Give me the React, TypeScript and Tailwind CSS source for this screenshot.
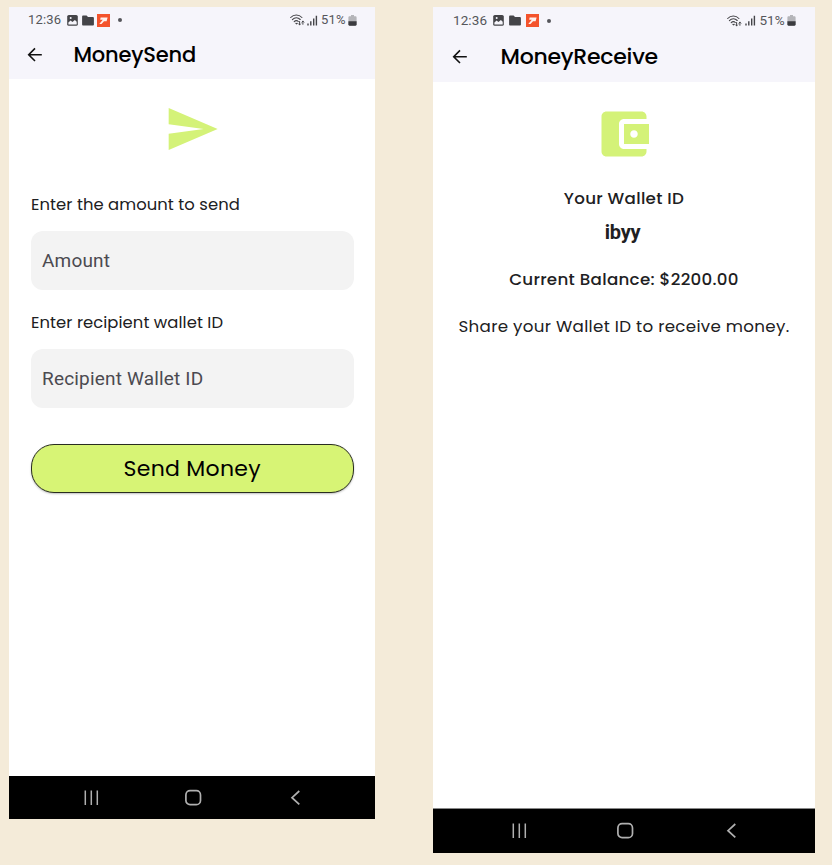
import React from "react";

const poppins = "font-['Poppins','Inter',sans-serif] whitespace-nowrap";
const roboto = "font-['Roboto',sans-serif] whitespace-nowrap";

function PictureIcon() {
  return (
    <svg className="h-[11px] w-[11px] shrink-0" viewBox="0 0 11 11">
      <rect x="0.200" width="10.600" height="10.800" rx="1.600" fill="#444448" />
      <path d="M1.400 9.500V7.400L3.600 5.400 5.400 7 7.900 5 9.700 6.700V9.500z" fill="#f6f5fb" />
      <circle cx="3.700" cy="3" r="1" fill="#f6f5fb" />
    </svg>
  );
}

function FolderIcon() {
  return (
    <svg className="h-[11px] w-3 shrink-0" viewBox="0 0 12 11">
      <path d="M1.2.6h3.4L6 2h4.8c.6 0 1.1.5 1.1 1.100v6.300c0 .6-.5 1.100-1.100 1.100H1.200C.6 10.500.1 10 .1 9.400V1.700C.1 1.100.6.6 1.200.6z" fill="#444448" />
    </svg>
  );
}

function OrangeIcon() {
  return (
    <svg className="h-[13px] w-[13px] shrink-0" viewBox="0 0 13 13">
      <rect width="13" height="13" fill="#f4532c" />
      <path d="M3.600 3.400h7L9.600 7.300H7L4.500 9.900H2.300L5.800 5.800H3.200z" fill="#fff" fillOpacity="0.920" />
    </svg>
  );
}

function WifiIcon() {
  return (
    <svg className="h-3 w-[15px] shrink-0" viewBox="0 0 15 12" fill="none" stroke="#444448" strokeWidth="1.100" strokeLinecap="round">
      <path d="M.7 3.500C3.700.2 8.900.2 11.900 3.500M2.400 5.600C4.700 3.200 8 3.200 10.200 5.500M4.200 7.600c1.300-1.300 3-1.300 4.100-.1M5.900 9.300l.6.500.7-.5" />
      <path d="M9.600 7.500v3.300M8.600 9.900l1 1 1-1M12.900 10.300V7.200M11.900 8.100l1-1 1 1" strokeWidth="1" />
    </svg>
  );
}

function SignalIcon() {
  return (
    <svg className="h-[11px] w-[11px] shrink-0" viewBox="0 0 11 11" stroke="#444448" strokeWidth="1.400">
      <path d="M1 8.500v2M3.800 6.200v4.300M6.700 3.500v7M9.400.7v9.800" />
    </svg>
  );
}

function BatteryIcon() {
  return (
    <svg className="h-[11px] w-[9px] shrink-0" viewBox="0 0 9 11">
      <path d="M3 0h3v1.300h1.400c.7 0 1.200.5 1.200 1.200v7.100c0 .7-.5 1.200-1.200 1.200H1.600C.9 10.800.4 10.300.4 9.600V2.500c0-.7.5-1.200 1.200-1.200H3z" fill="#b5b5b9" />
      <path d="M.4 6.200h8.200v3.400c0 .7-.5 1.200-1.200 1.200H1.600C.9 10.800.4 10.300.4 9.600z" fill="#3b3b3f" />
    </svg>
  );
}

function BackArrow() {
  return (
    <svg className="h-4 w-4 shrink-0" viewBox="0 0 16 16" fill="none" stroke="#111" strokeWidth="1.600">
      <path d="M14.800 7.700H2M8 1.400L1.700 7.700 8 14" />
    </svg>
  );
}

function NavBar({ className }: { className: string }) {
  return (
    <nav className={`flex shrink-0 items-center justify-between bg-black ${className}`}>
      <svg className="h-4 w-[18px]" viewBox="0 0 18 16" stroke="#b0b0b0" strokeWidth="1.500">
        <path d="M3.300 .5v14.600M9.300 .5v14.600M15.300 .5v14.600" />
      </svg>
      <svg className="h-[18px] w-[18px]" viewBox="0 0 18 18" fill="none" stroke="#b0b0b0" strokeWidth="1.700">
        <rect x="1.900" y="1.700" width="14.600" height="14" rx="4.200" />
      </svg>
      <svg className="h-4 w-[18px]" viewBox="0 0 18 16" fill="none" stroke="#b0b0b0" strokeWidth="1.700">
        <path d="M13.300 1L6 7.700l7.300 6.700" />
      </svg>
    </nav>
  );
}

function SendScreen() {
  return (
    <section className="flex h-[812px] w-[366px] shrink-0 flex-col bg-white">
      <header className="h-[72px] shrink-0 bg-[#f6f5fb]">
        <div className="flex h-[26px] items-center pl-[19px] pr-[18px]">
          <span className={`${roboto} w-[34px] text-[13px] tracking-[0.15px] text-[#55555a]`}>12:36</span>
          <div className="ml-[5px] flex items-center gap-1">
            <PictureIcon />
            <FolderIcon />
            <span className="-ml-px"><OrangeIcon /></span>
          </div>
          <i className="ml-[8px] size-1 rounded-full bg-[#55555a]" />
          <div className="ml-auto flex items-center">
            <WifiIcon />
            <span className="ml-0.5"><SignalIcon /></span>
            <span className={`${roboto} ml-[3px] mr-px w-[26px] text-[13px] tracking-[0.2px] text-[#55555a]`}>51%</span>
            <BatteryIcon />
          </div>
        </div>
        <div className="flex h-[44px] items-center pl-[18px]">
          <BackArrow />
          <h1 className={`${poppins} ml-[30.500px] text-[21px] font-medium leading-8 tracking-[-0.2px] text-black`}>MoneySend</h1>
        </div>
      </header>
      <main className="flex flex-1 flex-col px-[22px] pt-[22px]">
        <svg className="mx-auto size-14" viewBox="0 0 24 24" fill="#d4f278">
          <path d="M2.010 21L23 12 2.010 3 2 10l15 2-15 2z" />
        </svg>
        <label className={`${poppins} mt-[36px] text-[16.400px] leading-6 tracking-[0.06px] text-[#202022]`}>Enter the amount to send</label>
        <div className={`${roboto} mt-[14px] -mr-[0.500px] flex h-[59px] items-center rounded-xl bg-[#f3f3f3] pl-[11px] pt-px text-[19px] tracking-[0.18px] text-[#4b4a50]`}>Amount</div>
        <label className={`${poppins} mt-[21px] text-[16.400px] leading-6 tracking-[0.06px] text-[#202022]`}>Enter recipient wallet ID</label>
        <div className={`${roboto} mt-[14px] -mr-[0.500px] flex h-[59px] items-center rounded-xl bg-[#f3f3f3] pl-[11px] pt-0.5 text-[19px] tracking-[0.18px] text-[#4b4a50]`}>Recipient Wallet ID</div>
        <button className={`${poppins} mt-[36px] -mr-[0.500px] h-[49px] rounded-[23px] border border-[#292d20] bg-[#d7f475] text-[22px] tracking-[0.3px] text-black shadow-[0_1px_2px_rgba(0,0,0,0.25)]`}>Send Money</button>
      </main>
      <NavBar className="h-[43px] pl-[73px] pr-[71.500px]" />
    </section>
  );
}

function ReceiveScreen() {
  return (
    <section className="flex h-[846px] w-[382px] shrink-0 flex-col bg-white">
      <header className="h-[75px] shrink-0 bg-[#f6f5fb]">
        <div className="flex h-[27px] items-center pl-5 pr-[19.500px]">
          <span className={`${roboto} w-[35px] text-[13.500px] tracking-[0.1px] text-[#55555a]`}>12:36</span>
          <div className="ml-[5px] flex items-center gap-[5px]">
            <PictureIcon />
            <FolderIcon />
            <OrangeIcon />
          </div>
          <i className="ml-[8px] size-1 rounded-full bg-[#55555a]" />
          <div className="ml-auto flex items-center">
            <WifiIcon />
            <span className="ml-[3px]"><SignalIcon /></span>
            <span className={`${roboto} ml-[4px] mr-px w-[26px] text-[13.500px] text-[#55555a]`}>51%</span>
            <BatteryIcon />
          </div>
        </div>
        <div className="flex h-[46px] items-center pl-[19px]">
          <BackArrow />
          <h1 className={`${poppins} ml-[32.500px] text-[22px] font-medium leading-8 tracking-[-0.25px] text-black`}>MoneyReceive</h1>
        </div>
      </header>
      <main className="flex flex-1 flex-col items-center pt-[22px]">
        <svg className="size-[60px]" viewBox="0 0 24 24" fill="#d4f278">
          <path d="M21 18v1c0 1.100-.9 2-2 2H5c-1.110 0-2-.9-2-2V5c0-1.100.890-2 2-2h14c1.100 0 2 .9 2 2v1h-9c-1.110 0-2 .9-2 2v8c0 1.100.890 2 2 2h9zm-9-2h10V8H12v8zm4-2.500c-.830 0-1.500-.670-1.500-1.500s.670-1.500 1.500-1.500 1.500.670 1.500 1.500-.670 1.500-1.500 1.500z" />
        </svg>
        <p className={`${poppins} mt-[22px] text-[16.700px] font-medium leading-6 tracking-[0.3px] text-[#202022]`}>Your Wallet ID</p>
        <p className={`${roboto} mt-[10px] mr-[3px] text-[20px] font-bold leading-6 tracking-[-0.3px] text-[#202022]`}>ibyy</p>
        <p className={`${poppins} mt-[23px] text-[16.700px] font-medium leading-6 tracking-[0.3px] text-[#202022]`}>Current Balance: $2200.00</p>
        <p className={`${poppins} mt-[23px] text-[16.700px] leading-6 tracking-[0.3px] text-[#202022]`}>Share your Wallet ID to receive money.</p>
      </main>
      <NavBar className="h-[45px] border-t border-[#888] pl-[77px] pr-[75px]" />
    </section>
  );
}

export default function App() {
  return (
    <div className="flex h-[865px] w-[832px] items-start gap-[58px] overflow-hidden bg-[#f4ebd9] pl-[9px] pt-[7px]">
      <SendScreen />
      <ReceiveScreen />
    </div>
  );
}
